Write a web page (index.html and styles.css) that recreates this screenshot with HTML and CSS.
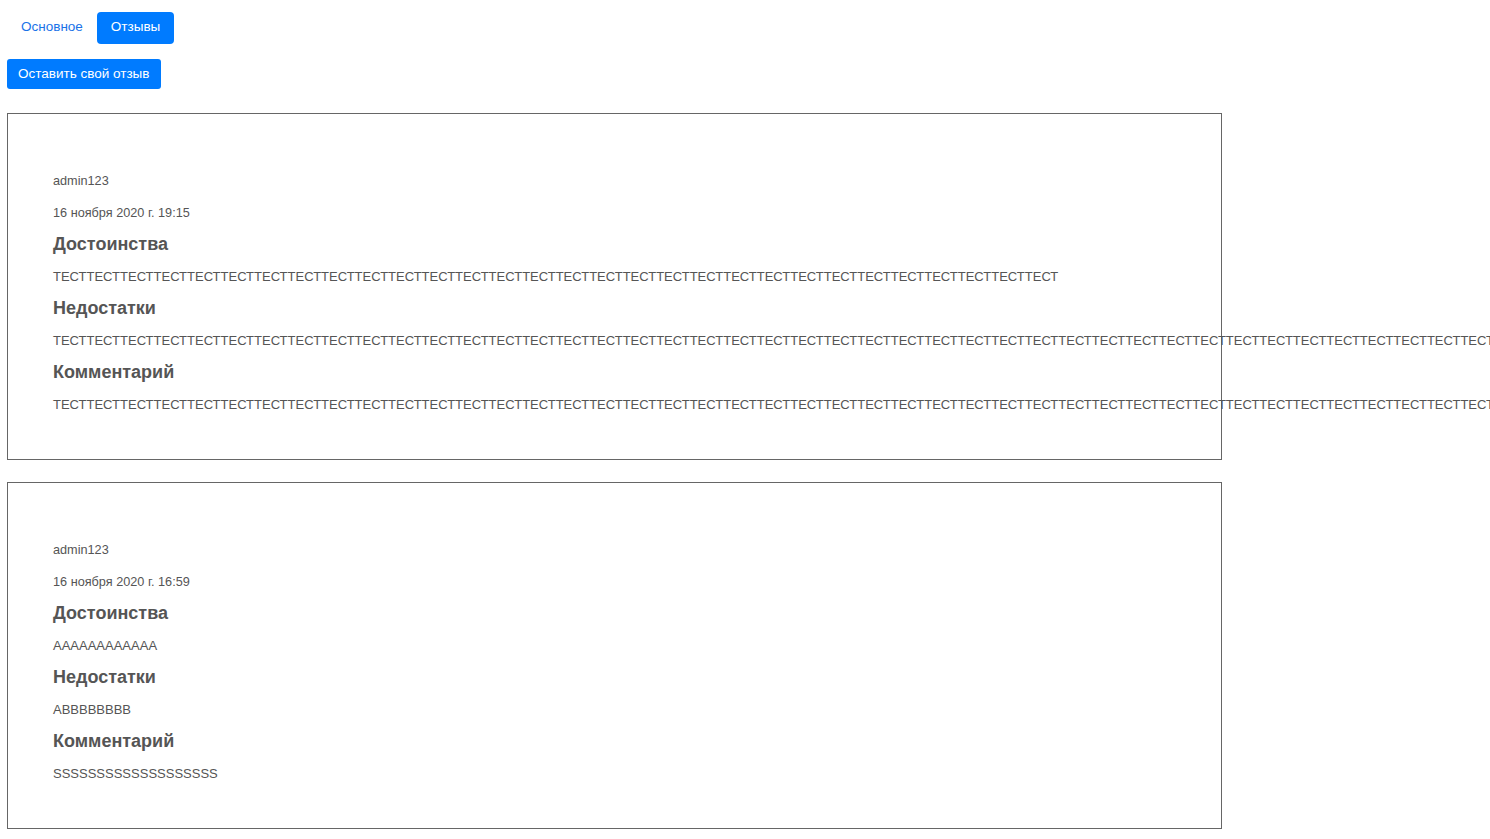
FILE: index.html
```html
<!doctype html>
<html lang="ru">
<head>
    <meta charset="UTF-8">
    <meta name="viewport" content="width=device-width, initial-scale=1.0">
    <title>Отзывы</title>
    <link rel="stylesheet" href="styles.css">
</head>
<body>
    <div class="page">
        <ul class="tabs">
            <li><a class="tab" href="#">Основное</a></li>
            <li><a class="tab active" href="#">Отзывы</a></li>
        </ul>
        <button class="add-review">Оставить свой отзыв</button>

        <div class="reviews">
            <div class="review">
                <p class="meta">admin123</p>
                <p class="meta">16 ноября 2020 г. 19:15</p>
                <h3>Достоинства</h3>
                <p class="text">ТЕСТТЕСТТЕСТТЕСТТЕСТТЕСТТЕСТТЕСТТЕСТТЕСТТЕСТТЕСТТЕСТТЕСТТЕСТТЕСТТЕСТТЕСТТЕСТТЕСТТЕСТТЕСТТЕСТТЕСТТЕСТТЕСТТЕСТТЕСТТЕСТТЕСТ</p>
                <h3>Недостатки</h3>
                <p class="text">ТЕСТТЕСТТЕСТТЕСТТЕСТТЕСТТЕСТТЕСТТЕСТТЕСТТЕСТТЕСТТЕСТТЕСТТЕСТТЕСТТЕСТТЕСТТЕСТТЕСТТЕСТТЕСТТЕСТТЕСТТЕСТТЕСТТЕСТТЕСТТЕСТТЕСТТЕСТТЕСТТЕСТТЕСТТЕСТТЕСТТЕСТТЕСТТЕСТТЕСТТЕСТТЕСТТЕСТТЕСТТЕСТТЕСТТЕСТТЕСТТЕСТТЕСТ</p>
                <h3>Комментарий</h3>
                <p class="text">ТЕСТТЕСТТЕСТТЕСТТЕСТТЕСТТЕСТТЕСТТЕСТТЕСТТЕСТТЕСТТЕСТТЕСТТЕСТТЕСТТЕСТТЕСТТЕСТТЕСТТЕСТТЕСТТЕСТТЕСТТЕСТТЕСТТЕСТТЕСТТЕСТТЕСТТЕСТТЕСТТЕСТТЕСТТЕСТТЕСТТЕСТТЕСТТЕСТТЕСТТЕСТТЕСТТЕСТТЕСТТЕСТТЕСТТЕСТТЕСТТЕСТТЕСТ</p>
            </div>
            <div class="review">
                <p class="meta">admin123</p>
                <p class="meta">16 ноября 2020 г. 16:59</p>
                <h3>Достоинства</h3>
                <p class="text">АААААААААААА</p>
                <h3>Недостатки</h3>
                <p class="text">АВВВВВВВВ</p>
                <h3>Комментарий</h3>
                <p class="text">SSSSSSSSSSSSSSSSSSS</p>
            </div>
        </div>
    </div>
</body>
</html>
```

FILE: styles.css
```css
* {
    padding: 0;
    margin: 0;
    box-sizing: border-box;
}
html, body {
    overflow: hidden;
}
body {
    font-family: "Liberation Sans", Arial, sans-serif;
    color: #555;
    background: #fff;
}
.page {
    padding: 12px 7px 10px;
}
.tabs {
    list-style: none;
    display: flex;
}
.tab {
    display: block;
    height: 32px;
    line-height: 30px;
    padding: 0 14px;
    font-size: 13.5px;
    color: #1a73e8;
    text-decoration: none;
    border-radius: 4px;
}
.tab.active {
    background: #007bff;
    color: #fff;
}
.add-review {
    display: block;
    margin-top: 15px;
    height: 30px;
    padding: 0 11px 2px;
    border: none;
    border-radius: 3px;
    background: #007bff;
    color: #fff;
    font-family: inherit;
    font-size: 13.5px;
    cursor: pointer;
}
.reviews {
    display: flex;
    flex-direction: column;
    gap: 22px;
    margin-top: 24px;
}
.review {
    width: 1215px;
    height: 347px;
    border: 1px solid #666;
    padding: 51px 45px 37px;
    display: flex;
    flex-direction: column;
}
.review p,
.review h3 {
    height: 32px;
    line-height: 32px;
    white-space: nowrap;
}
.meta,
.text {
    font-size: 13px;
}
.meta {
    font-size: 12.7px;
}
.review h3 {
    font-size: 18px;
    font-weight: bold;
    line-height: 30px;
}
```
